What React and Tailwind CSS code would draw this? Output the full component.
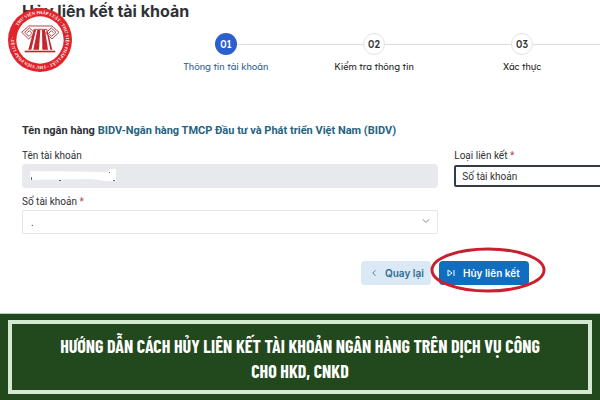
import { ChevronDown, ChevronLeft } from 'lucide-react'

const steps = [
  { number: '01', label: 'Thông tin tài khoản', active: true },
  { number: '02', label: 'Kiểm tra thông tin' },
  { number: '03', label: 'Xác thực' },
]

function Logo() {
  return (
    <svg viewBox="0 0 192 192" className="absolute left-2 top-2 size-16" role="img" aria-label="Thư viện pháp luật">
      <defs>
        <path id="ring" d="M18 96a78 78 0 0 1 156 0a78 78 0 0 1 -156 0" />
      </defs>
      <circle cx="96" cy="96" r="96" fill="#e0242b" />
      <circle cx="96" cy="96" r="71" fill="#fff" />
      <g transform="rotate(32 96 96)">
        <text fill="#fff" className="font-['Liberation_Serif',serif] text-[13px] font-bold">
          <textPath href="#ring">THƯ VIỆN PHÁP LUẬT · THƯ VIỆN PHÁP LUẬT · THƯ VIỆN PHÁP LUẬT ·</textPath>
        </text>
      </g>
      <g fill="#c4262e">
        <path d="M77 66h7L70 125H61zM88 66h9l-4 59H76zM102 66h9l9 59h-17zM115 66h3l15 59h-6z" />
        <path d="M50 128h92v5H50z" />
      </g>
      <g fill="none" stroke="#b9434a" strokeWidth="3">
        <path d="M76 64h42M62 54h70" />
        <path d="M62 54L41 73l21 20 19-18-17-15-14 13 13 12 9-9-8-8-6 6" />
        <path d="M132 54l21 19-21 20-19-18 17-15 14 13-13 12-9-9 8-8 6 6" />
      </g>
    </svg>
  )
}

function Stepper() {
  return (
    <ol className="ml-[152px] mt-[13px] flex">
      {steps.map((step) => (
        <li key={step.number} className="w-[148px] shrink-0 text-center">
          <div className="flex items-center font-[Lexend,Inter,sans-serif]">
            <span className={step.active ? 'flex-1' : 'h-px flex-1 bg-[#dcdcdc]'} />
            <span
              className={
                step.active
                  ? 'flex size-[22px] items-center justify-center rounded-full bg-[#2b5fd0] text-[10px] font-medium text-white'
                  : 'flex size-[22px] items-center justify-center rounded-full border border-[#e3e3e3] text-[10px] font-medium text-[#333]'
              }
            >
              {step.number}
            </span>
            <span className="h-px flex-1 bg-[#dcdcdc]" />
          </div>
          <p
            className={
              step.active
                ? 'mt-1 font-[Lexend,Inter,sans-serif] text-[9px] leading-4 text-[#3d6b92]'
                : 'mt-1 font-[Lexend,Inter,sans-serif] text-[9px] leading-4 text-[#333]'
            }
          >
            {step.label}
          </p>
        </li>
      ))}
      <li aria-hidden="true" className="mt-[11px] h-px flex-1 bg-[#dcdcdc]" />
    </ol>
  )
}

export default function App() {
  return (
    <div className="overflow-hidden bg-white font-[Inter,sans-serif] text-[#2e3135]">
      <main className="relative pb-7">
        <h1 className="pl-[22px] pt-px text-[16px] leading-5 font-bold">Hủy liên kết tài khoản</h1>
        <Logo />
        <div className="-mt-px">
          <Stepper />
        </div>

        <p className="mt-12 pl-[22px] font-[Roboto,sans-serif] text-[11px] leading-4 font-bold">
          Tên ngân hàng <span className="text-[#25637f]">BIDV-Ngân hàng TMCP Đầu tư và Phát triển Việt Nam (BIDV)</span>
        </p>

        <form className="mt-[9px] grid grid-cols-[20fr_7fr] gap-x-4 pl-[22px] font-[Roboto,sans-serif] text-[10px]">
          <div>
            <label htmlFor="name" className="block leading-4">Tên tài khoản</label>
            <div className="relative">
              <input id="name" disabled className="block h-6 w-full rounded-sm bg-[#e7e9ec]" />
              <svg viewBox="0 0 90 16" className="absolute left-2 top-1 h-4 w-[90px]">
                <path d="M0 3l78 1 1-3h7v12H74l-12-2L0 12z" fill="#fff" />
                <path d="M1 9h1v3H1zM29 12h2v1h-2zM79 4h1v1h-1zM83 12h2v1h-2z" fill="#666" />
              </svg>
            </div>
            <label htmlFor="number" className="mt-[6px] block leading-4">
              Số tài khoản <span className="text-[#b8434c]">*</span>
            </label>
            <div className="relative">
              <select id="number" className="block h-6 w-full appearance-none rounded-xs border border-[#e6e6e6] px-2">
                <option>.</option>
              </select>
              <ChevronDown className="pointer-events-none absolute right-[6px] top-[5px] size-3 text-[#888]" />
            </div>
          </div>
          <div className="-mr-1">
            <label htmlFor="type" className="block leading-4">
              Loại liên kết <span className="text-[#b8434c]">*</span>
            </label>
            <select id="type" className="mt-px block h-[22px] w-full appearance-none rounded-xs border-2 border-[#333b44] px-[6px]">
              <option>Số tài khoản</option>
            </select>
          </div>
        </form>

        <div className="mt-[27px] mr-[71px] flex justify-end gap-2 text-[10px] font-semibold">
          <button className="flex h-6 w-[70px] items-center gap-[6px] rounded-sm bg-[#dbe9f6] pl-2 text-[#2f6d92]">
            <ChevronLeft className="size-[10px]" />
            Quay lại
          </button>
          <div className="relative">
            <button className="flex h-6 w-[90px] items-center gap-2 rounded-sm bg-[#0f6ebf] pl-2 text-white">
              <svg viewBox="0 0 8 8" className="size-2" fill="none" stroke="currentColor">
                <path d="M1 1v6l4-3zM7 1v6" />
              </svg>
              Hủy liên kết
            </button>
            <svg viewBox="0 0 116 46" className="pointer-events-none absolute -left-[9px] -top-[14px] h-[46px] w-[116px]" fill="none">
              <ellipse cx="58" cy="23" rx="56" ry="21" stroke="#c9202f" strokeWidth="3" />
            </svg>
          </div>
        </div>
      </main>

      <footer className="border-t border-[#b9ceb6] bg-[#21491d] px-2 py-[6px]">
        <div className="border-4 border-[#d5e8d0] px-10 pt-[10px] pb-[6px] text-center">
          <p className="font-['Barlow_Condensed','Liberation_Sans_Narrow','Roboto_Condensed',sans-serif] text-[18px] leading-[25px] font-bold text-white">
            HƯỚNG DẪN CÁCH HỦY LIÊN KẾT TÀI KHOẢN NGÂN HÀNG TRÊN DỊCH VỤ CÔNG CHO HKD, CNKD
          </p>
        </div>
      </footer>
    </div>
  )
}
